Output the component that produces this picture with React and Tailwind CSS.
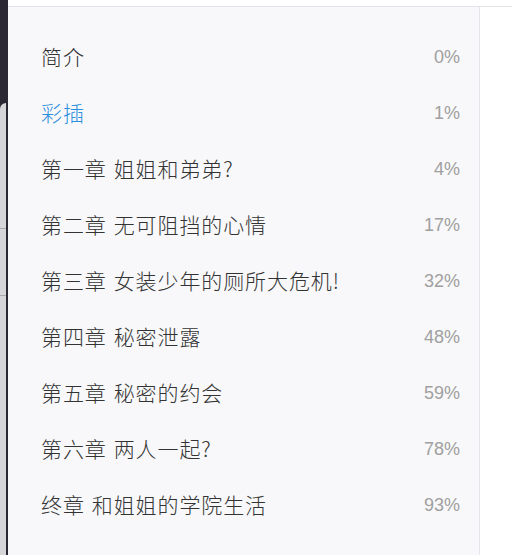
const chapters = [
  { title: "简介", pct: "0%" },
  { title: "彩插", pct: "1%", active: true },
  { title: "第一章 姐姐和弟弟?", pct: "4%" },
  { title: "第二章 无可阻挡的心情", pct: "17%" },
  { title: "第三章 女装少年的厕所大危机!", pct: "32%" },
  { title: "第四章 秘密泄露", pct: "48%" },
  { title: "第五章 秘密的约会", pct: "59%" },
  { title: "第六章 两人一起?", pct: "78%" },
  { title: "终章 和姐姐的学院生活", pct: "93%" },
];

export default function App() {
  return (
    <div className="flex h-[555px] w-[512px] overflow-hidden bg-white">
      {/* left edge of window behind */}
      <div className="flex w-[8px] shrink-0 flex-col bg-[#2b2733]">
        <div className="h-[103px] shrink-0" />
        <div className="mr-[2px] flex-1 rounded-tl-[6px] bg-[#d6d5d8]">
          <div className="mt-[125px] h-px bg-[#a9a8ad]" />
          <div className="mt-[66px] h-px bg-[#a9a8ad]" />
        </div>
      </div>

      <div className="flex flex-1 flex-col">
        <div className="h-[7px] shrink-0 border-b border-[#e4e4e8] bg-white" />
        <div className="flex flex-1">
          {/* chapter list */}
          <div className="w-[472px] shrink-0 border-r border-[#e6e6ea] bg-[#f8f8fa] pt-[22px]">
            {chapters.map((c) => (
              <div
                key={c.title}
                className="flex h-[56px] items-center justify-between pl-[33px] pr-[19px]"
              >
                <span
                  className={`font-['Noto_Sans_CJK_SC',sans-serif] text-[21px] font-light tracking-[0.9px] ${
                    c.active ? "text-[#2b8fe0]" : "text-[#333333]"
                  }`}
                >
                  {c.title.split(" ").map((part, i) => (
                    <span key={i} className={i > 0 ? "ml-[7px]" : ""}>
                      {part}
                    </span>
                  ))}
                </span>
                <span className="font-['Liberation_Sans',sans-serif] text-[18px] text-[#a0a0a0]">
                  {c.pct}
                </span>
              </div>
            ))}
          </div>
          <div className="flex-1 bg-white" />
        </div>
      </div>
    </div>
  );
}
